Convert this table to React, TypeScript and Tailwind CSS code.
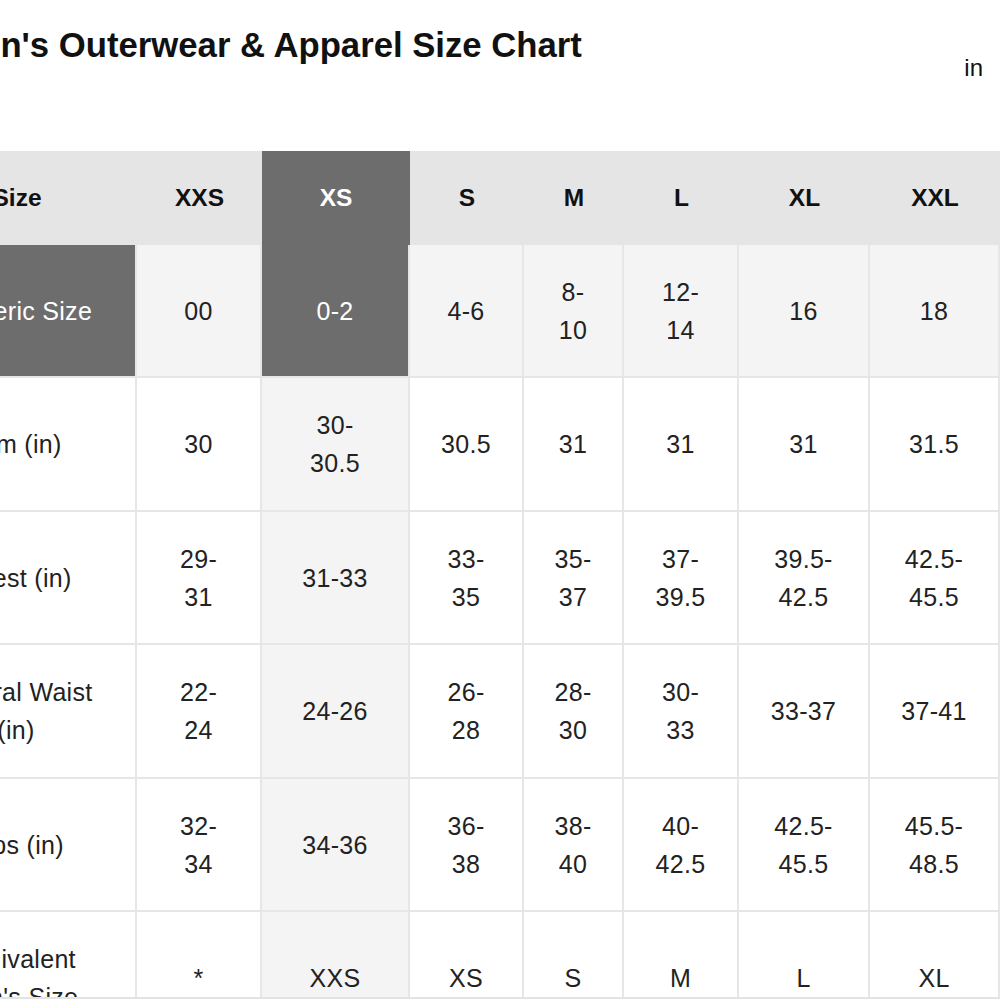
import React from "react";

const headers = ["Size", "XXS", "XS", "S", "M", "L", "XL", "XXL"];

const rows: string[][] = [
  ["Numeric Size", "00", "0-2", "4-6", "8-\n10", "12-\n14", "16", "18"],
  ["Arm (in)", "30", "30-\n30.5", "30.5", "31", "31", "31", "31.5"],
  ["Chest (in)", "29-\n31", "31-33", "33-\n35", "35-\n37", "37-\n39.5", "39.5-\n42.5", "42.5-\n45.5"],
  ["Natural Waist\n(in)", "22-\n24", "24-26", "26-\n28", "28-\n30", "30-\n33", "33-37", "37-41"],
  ["Hips (in)", "32-\n34", "34-36", "36-\n38", "38-\n40", "40-\n42.5", "42.5-\n45.5", "45.5-\n48.5"],
  ["Equivalent\nMen's Size", "*", "XXS", "XS", "S", "M", "L", "XL"],
];

export default function App() {
  return (
    <div
      className="w-[1000px] h-[1000px] overflow-hidden bg-white text-[#222]"
      style={{ fontFamily: '"Liberation Sans", Arial, sans-serif' }}
    >
      <div className="h-[151px] flex justify-between">
        <h1 className="-ml-[103px] mt-[25px] text-[34.7px] leading-[40px] font-bold text-[#111] whitespace-nowrap">
          Women's Outerwear &amp; Apparel Size Chart
        </h1>
        <div className="mt-[54px] mr-[17px] text-[24px] leading-[28px] text-[#111]">in</div>
      </div>
      <div className="h-[848px] overflow-hidden border-b-2 border-[#e3e3e3]">
        <div className="-ml-[103px] w-[1103px] grid grid-cols-[240px_125px_148px_114px_100px_115px_131px_130px] grid-rows-[94px_133px_134px_133px_134px_133px_134px] text-[25px] leading-[38px] tracking-[0.3px]">
          {headers.map((h, i) => (
            <div
              key={"h" + i}
              className={
                "flex items-center justify-center font-bold tracking-normal text-[24.5px] " +
                (i === 2 ? "bg-[#6d6d6d] text-white" : "bg-[#e5e5e5] text-[#111]")
              }
            >
              {h}
            </div>
          ))}
          {rows.map((r, ri) =>
            r.map((v, ci) => {
              const dark = ri === 0 && (ci === 0 || ci === 2);
              let bg = "bg-white";
              if (dark) bg = "bg-[#6d6d6d] text-white";
              else if (ri === 0 || ci === 2) bg = "bg-[#f4f4f4]";
              return (
                <div
                  key={ri + "-" + ci}
                  className={
                    "flex items-center justify-center text-center whitespace-pre-line border-r-2 border-b-2 border-[#e6e6e6] " +
                    bg
                  }
                >
                  {v}
                </div>
              );
            })
          )}
        </div>
      </div>
    </div>
  );
}
